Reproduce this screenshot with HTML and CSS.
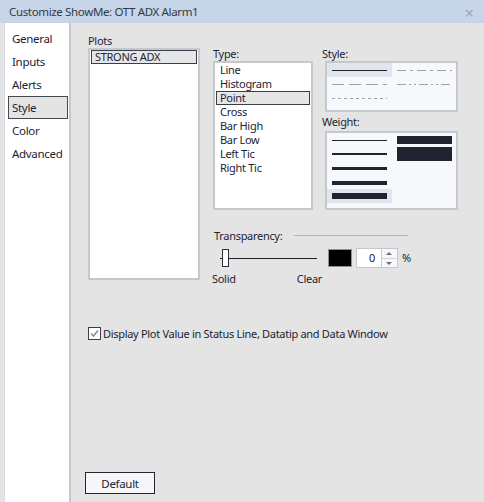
FILE: index.html
```html
<!DOCTYPE html>
<html>
<head>
<meta charset="utf-8">
<link rel="stylesheet" href="styles.css">
</head>
<body>
<div class="window">
  <div class="titlebar">
    <span class="title">Customize ShowMe: OTT ADX Alarm1</span>
    <span class="close">×</span>
  </div>
  <div class="main">
    <nav class="nav">
      <div class="nav-item">General</div>
      <div class="nav-item">Inputs</div>
      <div class="nav-item">Alerts</div>
      <div class="nav-item selected">Style</div>
      <div class="nav-item">Color</div>
      <div class="nav-item">Advanced</div>
    </nav>
    <section class="content">
      <div class="row1">
        <div class="plots-col">
          <div class="label">Plots</div>
          <div class="listbox plots-box">
            <div class="list-item selected">STRONG ADX</div>
          </div>
        </div>
        <div class="right-col">
          <div class="top-row">
            <div class="type-col">
              <div class="label">Type:</div>
              <div class="listbox type-box">
                <div class="list-item">Line</div>
                <div class="list-item">Histogram</div>
                <div class="list-item selected">Point</div>
                <div class="list-item">Cross</div>
                <div class="list-item">Bar High</div>
                <div class="list-item">Bar Low</div>
                <div class="list-item">Left Tic</div>
                <div class="list-item">Right Tic</div>
              </div>
            </div>
            <div class="sw-col">
              <div class="label">Style:</div>
              <div class="picker style-box">
                <svg width="129" height="47" viewBox="0 0 129 47">
                  <rect x="0" y="0" width="65" height="14" fill="#e1e6ee"/>
                  <line x1="5" y1="7.5" x2="60" y2="7.5" stroke="#20242e" stroke-width="1"/>
                  <line x1="70" y1="7.5" x2="125" y2="7.5" stroke="#9ba3ae" stroke-width="1" stroke-dasharray="9 4 3 4"/>
                  <line x1="5" y1="21.5" x2="60" y2="21.5" stroke="#9ba3ae" stroke-width="1" stroke-dasharray="12 5"/>
                  <line x1="70" y1="21.5" x2="125" y2="21.5" stroke="#9ba3ae" stroke-width="1" stroke-dasharray="9 3 2 3 2 3"/>
                  <line x1="5" y1="35.5" x2="60" y2="35.5" stroke="#9ba3ae" stroke-width="1" stroke-dasharray="3 3"/>
                </svg>
              </div>
              <div class="label weight-label">Weight:</div>
              <div class="picker weight-box">
                <svg width="129" height="75" viewBox="0 0 129 75">
                  <rect x="0" y="56" width="65" height="14" fill="#e1e6ee"/>
                  <rect x="5" y="7" width="55" height="1" fill="#20242e"/>
                  <rect x="5" y="20" width="55" height="2" fill="#20242e"/>
                  <rect x="5" y="34" width="55" height="3" fill="#20242e"/>
                  <rect x="5" y="48" width="55" height="4" fill="#20242e"/>
                  <rect x="5" y="60" width="55" height="6" fill="#20242e"/>
                  <rect x="70" y="3" width="55" height="8" fill="#20242e"/>
                  <rect x="70" y="14" width="55" height="14" fill="#20242e"/>
                </svg>
              </div>
            </div>
          </div>
          <div class="transparency">
            <div class="trans-head">
              <span class="label">Transparency:</span>
              <span class="rule"></span>
            </div>
            <div class="trans-row">
              <div class="slider">
                <div class="track-area">
                  <span class="track"></span>
                  <span class="thumb"></span>
                </div>
                <div class="slider-labels">
                  <span>Solid</span>
                  <span>Clear</span>
                </div>
              </div>
              <span class="swatch"></span>
              <span class="num-input">0</span>
              <span class="spinner">
                <span class="spin up"></span>
                <span class="spin down"></span>
              </span>
              <span class="pct">%</span>
            </div>
          </div>
        </div>
      </div>
      <div class="check-row">
        <span class="checkbox">
          <svg width="11" height="11" viewBox="0 0 11 11"><path d="M2 5.5 L4.5 8 L9 2.5" fill="none" stroke="#8a8f96" stroke-width="1.6"/></svg>
        </span>
        <span>Display Plot Value in Status Line, Datatip and Data Window</span>
      </div>
      <div class="spacer"></div>
      <button class="btn">Default</button>
    </section>
  </div>
</div>
</body>
</html>
```
FILE: styles.css
```css
* { box-sizing: border-box; }
html, body { margin: 0; padding: 0; }
body {
  width: 484px;
  height: 502px;
  overflow: hidden;
  background: #e4e4e4;
  font-family: "Noto Sans", "Open Sans", sans-serif;
  font-size: 11px;
  letter-spacing: -0.3px;
  color: #1c2433;
}
.window { width: 484px; height: 502px; display: flex; flex-direction: column; }
.titlebar {
  height: 23px;
  background: #c6d5e8;
  display: flex;
  align-items: center;
  justify-content: space-between;
  padding: 0 10px 0 9px;
}
.title { font-size: 11.5px; letter-spacing: -0.35px; color: #333a44; }
.close { font-size: 16px; color: #9ea6b0; line-height: 1; margin-top: 2px; letter-spacing: 0; }
.main { flex: 1; display: flex; }
.nav {
  margin-left: 4px;
  width: 67px;
  background: #ffffff;
  border-left: 1px solid #d8dce2;
  border-right: 2px solid #c4c8cf;
  padding: 4px 1px 0 3px;
}
.nav-item {
  height: 23px;
  line-height: 21px;
  padding-left: 3px;
  border: 1px solid transparent;
  font-size: 11.5px;
}
.nav-item.selected { background: #e4e4e4; border-color: #444a52; }
.content {
  flex: 1;
  padding: 10px 0 8px 17px;
  display: flex;
  flex-direction: column;
}
.label { height: 15px; line-height: 15px; display: block; }
.row1 { display: flex; }
.plots-col { width: 112px; }
.listbox { background: #fff; border: 2px solid #c4c8cf; padding: 0 1px; }
.plots-box { height: 232px; }
.list-item {
  height: 14px;
  line-height: 12px;
  padding-left: 3px;
  border: 1px solid transparent;
}
.list-item.selected { background: #e6e6e6; border-color: #3a3f47; }
.right-col { margin-left: 13px; margin-top: 13px; }
.top-row { display: flex; }
.type-col { width: 100px; }
.type-box { height: 149px; }
.sw-col { margin-left: 9px; }
.picker {
  margin-left: 3px;
  width: 133px;
  background: #f6f8fb;
  border: 2px solid #c4c8cf;
}
.picker svg { display: block; }
.style-box { height: 51px; }
.weight-label { height: 19px; line-height: 20px; }
.weight-box { height: 79px; }
.transparency { margin-top: 18px; }
.trans-head { display: flex; align-items: center; padding-left: 1px; }
.rule { width: 114px; height: 1px; background: #b4b8be; margin-left: 12px; }
.trans-row { display: flex; align-items: flex-start; margin-top: 5px; }
.slider { width: 110px; margin-left: -1px; }
.track-area { position: relative; height: 20px; }
.track { position: absolute; left: 8px; right: 5px; top: 10px; height: 1px; background: #1f232b; }
.thumb {
  position: absolute;
  left: 10px;
  top: 1px;
  width: 7px;
  height: 18px;
  background: #fff;
  border: 1px solid #2a2e36;
}
.slider-labels { display: flex; justify-content: space-between; line-height: 16px; margin-top: 3px; }
.swatch {
  width: 24px;
  height: 18px;
  margin-top: 1px;
  margin-left: 6px;
  background: #000;
  border: 1px solid #8c9098;
}
.num-input {
  width: 26px;
  height: 20px;
  margin-left: 4px;
  background: #fff;
  border: 1px solid #c4c8cf;
  text-align: right;
  padding-right: 6px;
  line-height: 18px;
}
.spinner {
  width: 16px;
  height: 20px;
  display: flex;
  flex-direction: column;
  border: 1px solid #c4c8cf;
  border-left: none;
  background: #f6f8fb;
}
.spin { flex: 1; position: relative; }
.spin.up { border-bottom: 1px solid #d0d4da; }
.spin::after {
  content: "";
  position: absolute;
  left: 4px;
  top: 3px;
  border-left: 3px solid transparent;
  border-right: 3px solid transparent;
}
.spin.up::after { border-bottom: 3px solid #6a7078; }
.spin.down::after { border-top: 3px solid #6a7078; }
.pct { margin-left: 4px; line-height: 20px; }
.check-row {
  display: flex;
  align-items: center;
  margin-top: 40px;
  height: 13px;
}
.checkbox {
  width: 13px;
  height: 13px;
  border: 1px solid #3a3f47;
  background: #fff;
  margin-right: 2px;
  display: flex;
  align-items: center;
  justify-content: center;
}
.checkbox svg { display: block; }
.spacer { flex: 1; }
.btn {
  align-self: flex-start;
  margin-left: -3px;
  width: 70px;
  height: 22px;
  background: #f6f7fa;
  border: 1px solid #22262c;
  font-family: inherit;
  font-size: 11.5px;
  letter-spacing: -0.3px;
  color: #1c2433;
  padding: 0;
}
```
